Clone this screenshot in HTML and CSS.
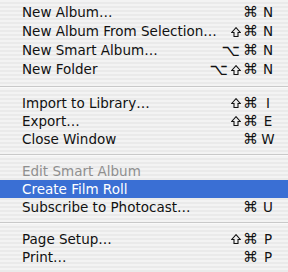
FILE: index.html
```html
<!DOCTYPE html>
<html lang="en">
<head>
    <meta charset="UTF-8">
    <title>File Menu</title>
    <link rel="stylesheet" href="styles.css">
</head>
<body>
    <div class="menu">
        <div class="group tall">
            <div class="item"><span class="label">New Album…</span><span class="keys"><span class="mods"><span class="cmd">⌘</span></span><span class="key">N</span></span></div>
            <div class="item"><span class="label">New Album From Selection…</span><span class="keys"><span class="mods"><svg class="shift" viewBox="0 0 10 10"><polygon points="5,0.7 9.3,5.5 7,5.5 7,9.5 3,9.5 3,5.5 0.7,5.5"/></svg><span class="cmd">⌘</span></span><span class="key">N</span></span></div>
            <div class="item"><span class="label">New Smart Album…</span><span class="keys"><span class="mods"><span class="opt">⌥</span><span class="cmd">⌘</span></span><span class="key">N</span></span></div>
            <div class="item"><span class="label">New Folder</span><span class="keys"><span class="mods"><span class="opt">⌥</span><svg class="shift" viewBox="0 0 10 10"><polygon points="5,0.7 9.3,5.5 7,5.5 7,9.5 3,9.5 3,5.5 0.7,5.5"/></svg><span class="cmd">⌘</span></span><span class="key">N</span></span></div>
        </div>
        <div class="separator first"></div>
        <div class="group">
            <div class="item"><span class="label">Import to Library…</span><span class="keys"><span class="mods"><svg class="shift" viewBox="0 0 10 10"><polygon points="5,0.7 9.3,5.5 7,5.5 7,9.5 3,9.5 3,5.5 0.7,5.5"/></svg><span class="cmd">⌘</span></span><span class="key">I</span></span></div>
            <div class="item"><span class="label">Export…</span><span class="keys"><span class="mods"><svg class="shift" viewBox="0 0 10 10"><polygon points="5,0.7 9.3,5.5 7,5.5 7,9.5 3,9.5 3,5.5 0.7,5.5"/></svg><span class="cmd">⌘</span></span><span class="key">E</span></span></div>
            <div class="item"><span class="label">Close Window</span><span class="keys"><span class="mods"><span class="cmd">⌘</span></span><span class="key">W</span></span></div>
        </div>
        <div class="separator"></div>
        <div class="group">
            <div class="item disabled"><span class="label">Edit Smart Album</span></div>
            <div class="item selected"><span class="label">Create Film Roll</span></div>
            <div class="item"><span class="label">Subscribe to Photocast…</span><span class="keys"><span class="mods"><span class="cmd">⌘</span></span><span class="key">U</span></span></div>
        </div>
        <div class="separator"></div>
        <div class="group">
            <div class="item"><span class="label">Page Setup…</span><span class="keys"><span class="mods"><svg class="shift" viewBox="0 0 10 10"><polygon points="5,0.7 9.3,5.5 7,5.5 7,9.5 3,9.5 3,5.5 0.7,5.5"/></svg><span class="cmd">⌘</span></span><span class="key">P</span></span></div>
            <div class="item"><span class="label">Print…</span><span class="keys"><span class="mods"><span class="cmd">⌘</span></span><span class="key">P</span></span></div>
        </div>
    </div>
</body>
</html>
```

FILE: styles.css
```css
* {
    margin: 0;
    padding: 0;
    box-sizing: border-box;
}

html, body {
    width: 288px;
    height: 272px;
    overflow: hidden;
}

body {
    font-family: "DejaVu Sans", Verdana, sans-serif;
    font-size: 13.5px;
    color: #111;
    background: repeating-linear-gradient(to bottom, #f3f3f3 0, #f3f3f3 2px, #eaeaea 2px, #eaeaea 4px);
}

.menu {
    display: flex;
    flex-direction: column;
    height: 272px;
    padding-top: 3px;
}

.group {
    display: flex;
    flex-direction: column;
}

.item {
    display: flex;
    align-items: center;
    justify-content: space-between;
    height: 18px;
    line-height: 18px;
    padding: 0 13px 0 22px;
    white-space: nowrap;
}

.tall .item {
    height: 19px;
    line-height: 19px;
}

.item.disabled {
    color: #8f8f8f;
}

.item.selected {
    background: #3a6fd4;
    color: #fff;
}

.keys {
    display: flex;
    align-items: center;
}

.mods {
    display: flex;
    align-items: center;
    justify-content: flex-end;
    gap: 2px;
}

.cmd {
    font-size: 15px;
}

.opt {
    font-size: 16px;
    margin-right: 1px;
}

.shift {
    width: 10px;
    height: 10px;
    fill: none;
    stroke: #111;
    stroke-width: 1.1;
    stroke-linejoin: miter;
}

.key {
    width: 14px;
    margin-left: 3px;
    text-align: center;
}

.separator {
    height: 14px;
    display: flex;
    flex-direction: column;
    justify-content: center;
}

.separator.first {
    height: 15px;
}

.separator::before {
    content: "";
    display: block;
    height: 1px;
    background: #c9c9c9;
    border-bottom: 1px solid #f9f9f9;
    box-sizing: content-box;
}
```
